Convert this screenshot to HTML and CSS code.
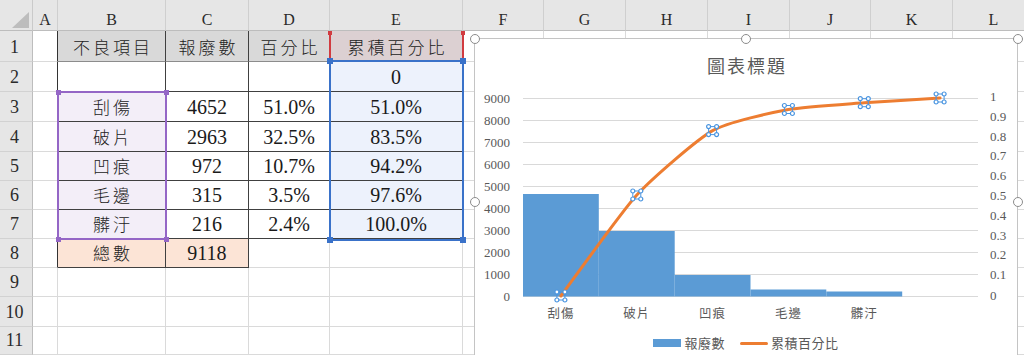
FILE: index.html
```html
<!DOCTYPE html>
<html lang="zh-Hant">
<head>
    <meta charset="UTF-8">
    <meta name="viewport" content="width=device-width, initial-scale=1.0">
    <title>不良項目 柏拉圖</title>
    <link rel="stylesheet" href="styles.css">
</head>
<body>

    <!-- Worksheet grid -->
    <div class="sheet">
        <!-- column headers -->
        <div class="corner"></div>
        <div class="col-head">A</div>
        <div class="col-head">B</div>
        <div class="col-head">C</div>
        <div class="col-head">D</div>
        <div class="col-head">E</div>
        <div class="col-head">F</div>
        <div class="col-head">G</div>
        <div class="col-head">H</div>
        <div class="col-head">I</div>
        <div class="col-head">J</div>
        <div class="col-head">K</div>
        <div class="col-head">L</div>

        <!-- row 1 -->
        <div class="row-head">1</div>
        <div class="cell a-edge"></div>
        <div class="cell tb head-fill"><span class="zh">不良項目</span></div>
        <div class="cell tb head-fill"><span class="zh">報廢數</span></div>
        <div class="cell tb head-fill"><span class="zh">百分比</span></div>
        <div class="cell tb ref-fill"><span class="zh">累積百分比</span></div>
        <div class="cell"></div><div class="cell"></div><div class="cell"></div><div class="cell"></div><div class="cell"></div><div class="cell"></div><div class="cell"></div>

        <!-- row 2 -->
        <div class="row-head">2</div>
        <div class="cell a-edge"></div>
        <div class="cell tb"></div>
        <div class="cell tb"></div>
        <div class="cell tb"></div>
        <div class="cell tb sel-fill">0</div>
        <div class="cell"></div><div class="cell"></div><div class="cell"></div><div class="cell"></div><div class="cell"></div><div class="cell"></div><div class="cell"></div>

        <!-- row 3 -->
        <div class="row-head">3</div>
        <div class="cell a-edge"></div>
        <div class="cell tb pick-fill"><span class="zh">刮傷</span></div>
        <div class="cell tb">4652</div>
        <div class="cell tb">51.0%</div>
        <div class="cell tb sel-fill">51.0%</div>
        <div class="cell"></div><div class="cell"></div><div class="cell"></div><div class="cell"></div><div class="cell"></div><div class="cell"></div><div class="cell"></div>

        <!-- row 4 -->
        <div class="row-head">4</div>
        <div class="cell a-edge"></div>
        <div class="cell tb pick-fill"><span class="zh">破片</span></div>
        <div class="cell tb">2963</div>
        <div class="cell tb">32.5%</div>
        <div class="cell tb sel-fill">83.5%</div>
        <div class="cell"></div><div class="cell"></div><div class="cell"></div><div class="cell"></div><div class="cell"></div><div class="cell"></div><div class="cell"></div>

        <!-- row 5 -->
        <div class="row-head">5</div>
        <div class="cell a-edge"></div>
        <div class="cell tb pick-fill"><span class="zh">凹痕</span></div>
        <div class="cell tb">972</div>
        <div class="cell tb">10.7%</div>
        <div class="cell tb sel-fill">94.2%</div>
        <div class="cell"></div><div class="cell"></div><div class="cell"></div><div class="cell"></div><div class="cell"></div><div class="cell"></div><div class="cell"></div>

        <!-- row 6 -->
        <div class="row-head">6</div>
        <div class="cell a-edge"></div>
        <div class="cell tb pick-fill"><span class="zh">毛邊</span></div>
        <div class="cell tb">315</div>
        <div class="cell tb">3.5%</div>
        <div class="cell tb sel-fill">97.6%</div>
        <div class="cell"></div><div class="cell"></div><div class="cell"></div><div class="cell"></div><div class="cell"></div><div class="cell"></div><div class="cell"></div>

        <!-- row 7 -->
        <div class="row-head">7</div>
        <div class="cell a-edge"></div>
        <div class="cell tb pick-fill"><span class="zh">髒汙</span></div>
        <div class="cell tb">216</div>
        <div class="cell tb">2.4%</div>
        <div class="cell tb sel-fill">100.0%</div>
        <div class="cell"></div><div class="cell"></div><div class="cell"></div><div class="cell"></div><div class="cell"></div><div class="cell"></div><div class="cell"></div>

        <!-- row 8 -->
        <div class="row-head">8</div>
        <div class="cell a-edge"></div>
        <div class="cell tb total-fill"><span class="zh">總數</span></div>
        <div class="cell tb total-fill">9118</div>
        <div class="cell"></div>
        <div class="cell"></div>
        <div class="cell"></div><div class="cell"></div><div class="cell"></div><div class="cell"></div><div class="cell"></div><div class="cell"></div><div class="cell"></div>

        <!-- rows 9 - 11 -->
        <div class="row-head">9</div>
        <div class="cell"></div><div class="cell"></div><div class="cell"></div><div class="cell"></div><div class="cell"></div><div class="cell"></div>
        <div class="cell"></div><div class="cell"></div><div class="cell"></div><div class="cell"></div><div class="cell"></div><div class="cell"></div>

        <div class="row-head">10</div>
        <div class="cell"></div><div class="cell"></div><div class="cell"></div><div class="cell"></div><div class="cell"></div><div class="cell"></div>
        <div class="cell"></div><div class="cell"></div><div class="cell"></div><div class="cell"></div><div class="cell"></div><div class="cell"></div>

        <div class="row-head">11</div>
        <div class="cell"></div><div class="cell"></div><div class="cell"></div><div class="cell"></div><div class="cell"></div><div class="cell"></div>
        <div class="cell"></div><div class="cell"></div><div class="cell"></div><div class="cell"></div><div class="cell"></div><div class="cell"></div>

        <!-- formula reference highlights (drawn over the cells) -->
        <div class="ref-red"><i class="dot dot-tl"></i><i class="dot dot-tr"></i></div>
        <div class="ref-purple"><i class="sq sq-tl"></i><i class="sq sq-tr"></i><i class="sq sq-bl"></i><i class="sq sq-br"></i></div>
        <div class="ref-blue"><i class="sq sq-tl"></i><i class="sq sq-tr"></i><i class="sq sq-bl"></i><i class="sq sq-br"></i></div>

        <!-- floating chart -->
        <div class="chart">
            <span class="handle h-tl"></span>
            <span class="handle h-tm"></span>
            <span class="handle h-tr"></span>
            <span class="handle h-ml"></span>
            <span class="handle h-mr"></span>

            <div class="chart-title">圖表標題</div>

            <svg class="plot" width="542" height="250" viewBox="0 0 542 250">
                <defs>
                    <g id="mk">
                        <rect x="-4" y="-4" width="8" height="8" class="mk-box"/>
                        <circle cx="-4" cy="-4" r="2" class="mk-dot"/>
                        <circle cx="4" cy="-4" r="2" class="mk-dot"/>
                        <circle cx="-4" cy="4" r="2" class="mk-dot"/>
                        <circle cx="4" cy="4" r="2" class="mk-dot"/>
                    </g>
                </defs>

                <!-- gridlines every 1000 -->
                <g class="grid">
                    <line x1="48" x2="503" y1="21.5" y2="21.5"/>
                    <line x1="48" x2="503" y1="43.5" y2="43.5"/>
                    <line x1="48" x2="503" y1="65.5" y2="65.5"/>
                    <line x1="48" x2="503" y1="87.5" y2="87.5"/>
                    <line x1="48" x2="503" y1="109.5" y2="109.5"/>
                    <line x1="48" x2="503" y1="131.5" y2="131.5"/>
                    <line x1="48" x2="503" y1="153.5" y2="153.5"/>
                    <line x1="48" x2="503" y1="175.5" y2="175.5"/>
                    <line x1="48" x2="503" y1="197.5" y2="197.5"/>
                    <line x1="48" x2="503" y1="219.5" y2="219.5"/>
                </g>

                <!-- left axis -->
                <g class="axis left">
                    <text x="35" y="26">9000</text>
                    <text x="35" y="48">8000</text>
                    <text x="35" y="70">7000</text>
                    <text x="35" y="92">6000</text>
                    <text x="35" y="114">5000</text>
                    <text x="35" y="136">4000</text>
                    <text x="35" y="158">3000</text>
                    <text x="35" y="180">2000</text>
                    <text x="35" y="202">1000</text>
                    <text x="35" y="224">0</text>
                </g>

                <!-- right axis -->
                <g class="axis right">
                    <text x="515" y="24">1</text>
                    <text x="515" y="44">0.9</text>
                    <text x="515" y="64">0.8</text>
                    <text x="515" y="83">0.7</text>
                    <text x="515" y="103">0.6</text>
                    <text x="515" y="123">0.5</text>
                    <text x="515" y="143">0.4</text>
                    <text x="515" y="163">0.3</text>
                    <text x="515" y="182">0.2</text>
                    <text x="515" y="202">0.1</text>
                    <text x="515" y="223">0</text>
                </g>

                <!-- 報廢數 bars -->
                <g class="bars">
                    <rect x="48" y="117" width="75.8" height="102.5"/>
                    <rect x="123.8" y="154" width="75.9" height="65.5"/>
                    <rect x="199.7" y="198" width="75.8" height="21.5"/>
                    <rect x="275.5" y="212.5" width="75.8" height="7"/>
                    <rect x="351.3" y="214.5" width="75.9" height="5"/>
                </g>

                <!-- category labels -->
                <g class="cats">
                    <text x="85.9" y="241">刮傷</text>
                    <text x="161.8" y="241">破片</text>
                    <text x="237.6" y="241">凹痕</text>
                    <text x="313.4" y="241">毛邊</text>
                    <text x="389.3" y="241">髒汙</text>
                </g>

                <!-- 累積百分比 line -->
                <path class="cum" d="M85.9 219 C93.5 208.9 146.6 134.5 161.8 118 C177 101.5 222.4 62.2 237.6 53.6 C252.8 45 298.2 35.3 313.4 32.5 C328.6 29.7 374.1 26.9 389.3 25.7 C404.5 24.6 457.5 21.5 465.1 21"/>

                <use href="#mk" x="85.9" y="219"/>
                <use href="#mk" x="161.8" y="118"/>
                <use href="#mk" x="237.6" y="53.6"/>
                <use href="#mk" x="313.4" y="32.5"/>
                <use href="#mk" x="389.3" y="25.7"/>
                <use href="#mk" x="465.1" y="21"/>
            </svg>

            <div class="legend">
                <span class="key"><i class="swatch-bar"></i>報廢數</span>
                <span class="key"><i class="swatch-line"></i>累積百分比</span>
            </div>
        </div>
    </div>

</body>
</html>
```

FILE: styles.css
```css
/* Page */
html, body {
    margin: 0;
    padding: 0;
    overflow: hidden;
    background: #fff;
}

body {
    font-family: "Liberation Serif", "Noto Sans CJK TC", serif;
    color: #1a1a1a;
}

/* Worksheet grid */
.sheet {
    position: relative;
    display: grid;
    grid-template-columns: 33px 25px 108px 83px 81px 133px 81px 82px 82px 82px 81px 82px 82px;
    grid-template-rows: 31px 31px 30px 30px 30px 29px 29px 29px 29px 29px 30px 28px;
    width: 1035px;
}

.corner {
    display: flex;
    align-items: flex-end;
    justify-content: flex-end;
    padding: 0 3px 2px 0;
    background: #e6e6e6;
    border-right: 1px solid #cacaca;
    border-bottom: 1px solid #bdbdbd;
    box-sizing: border-box;
}

.corner::after {
    content: "";
    width: 17px;
    height: 16px;
    background: #bdbdbd;
    clip-path: polygon(100% 0, 100% 100%, 0 100%);
}

.col-head {
    display: flex;
    align-items: flex-end;
    justify-content: center;
    background: #e6e6e6;
    border-right: 1px solid #cfcfcf;
    border-bottom: 1px solid #bdbdbd;
    box-sizing: border-box;
    font-size: 16px;
    line-height: 18px;
    color: #2b2b2b;
    padding-bottom: 1px;
}

.row-head {
    display: flex;
    align-items: flex-end;
    justify-content: center;
    background: #e6e6e6;
    border-right: 1px solid #bdbdbd;
    border-bottom: 1px solid #d2d2d2;
    box-sizing: border-box;
    font-size: 18px;
    line-height: 24px;
    padding: 0 3px 2px 0;
    color: #2b2b2b;
}

.cell {
    display: flex;
    align-items: flex-end;
    justify-content: center;
    border-right: 1px solid #dadada;
    border-bottom: 1px solid #dadada;
    box-sizing: border-box;
    font-size: 20px;
    line-height: 24px;
    padding-bottom: 2px;
    white-space: nowrap;
}

/* Table borders */
.a-edge {
    border-right-color: #333;
}

.tb {
    border-right-color: #404040;
    border-bottom-color: #404040;
}

.zh {
    font-family: "Noto Sans CJK TC", sans-serif;
    font-size: 17px;
    font-weight: 300;
    letter-spacing: 3px;
    padding-left: 3px;
    color: #222;
}

/* Cell fills */
.head-fill {
    background: #d9d9d9;
    border-bottom-color: #8c8c8c;
}

.ref-fill {
    background: #dcd0d2;
}

.sel-fill {
    background: #edf2fc;
}

.pick-fill {
    background: #f3eef8;
}

.total-fill {
    background: #fce4d6;
}

/* Formula reference highlights */
.ref-red {
    position: absolute;
    left: 329px;
    top: 31px;
    width: 135px;
    height: 31px;
    border-left: 2px solid #d13b40;
    border-right: 2px solid #d13b40;
    box-sizing: border-box;
}

.ref-red .dot {
    position: absolute;
    top: 0;
    width: 4px;
    height: 4px;
    background: #d13b40;
}

.ref-red .dot-tl { left: -3px; }
.ref-red .dot-tr { right: -3px; }

.ref-purple,
.ref-blue {
    position: absolute;
    box-sizing: border-box;
}

.ref-purple {
    left: 57px;
    top: 91px;
    width: 110px;
    height: 149px;
    border: 2px solid #9466c6;
}

.ref-blue {
    left: 329px;
    top: 60px;
    width: 135px;
    height: 181px;
    border: 2px solid #3a72c9;
}

.sq {
    position: absolute;
    width: 6px;
    height: 6px;
}

.ref-purple .sq { background: #9466c6; width: 5px; height: 5px; }
.ref-blue .sq { background: #3a72c9; }

.ref-purple .sq-tl { left: -3.5px; top: -3.5px; }
.ref-purple .sq-tr { right: -3.5px; top: -3.5px; }
.ref-purple .sq-bl { left: -3.5px; bottom: -3.5px; }
.ref-purple .sq-br { right: -3.5px; bottom: -3.5px; }

.ref-blue .sq-tl { left: -4px; top: -4px; }
.ref-blue .sq-tr { right: -4px; top: -4px; }
.ref-blue .sq-bl { left: -4px; bottom: -4px; }
.ref-blue .sq-br { right: -4px; bottom: -4px; }

/* Floating chart */
.chart {
    position: absolute;
    left: 474px;
    top: 38px;
    width: 544px;
    height: 328px;
    background: #fff;
    border: 1px solid #c4c4c4;
    box-sizing: border-box;
}

.handle {
    position: absolute;
    width: 10px;
    height: 10px;
    border: 1px solid #8c8c8c;
    border-radius: 50%;
    background: #fff;
    box-sizing: border-box;
}

.h-tl { left: -5px; top: -5px; }
.h-tm { left: 266px; top: -5px; }
.h-tr { left: 538px; top: -5px; }
.h-ml { left: -5px; top: 158px; }
.h-mr { left: 538px; top: 158px; }

.chart-title {
    padding: 14px 0 0 2px;
    line-height: 24px;
    text-align: center;
    font-family: "Noto Sans CJK TC", sans-serif;
    font-size: 18px;
    letter-spacing: 2px;
    color: #595959;
}

.plot {
    display: block;
}

.grid line {
    stroke: #d9d9d9;
    stroke-width: 1;
}

.axis text {
    font-family: "Liberation Serif", serif;
    font-size: 13px;
    fill: #595959;
}

.axis.left text {
    text-anchor: end;
}

.cats text {
    font-family: "Noto Sans CJK TC", sans-serif;
    font-size: 12.5px;
    letter-spacing: 1px;
    text-anchor: middle;
    fill: #595959;
}

.bars rect {
    fill: #5b9bd5;
}

.cum {
    fill: none;
    stroke: #ed7d31;
    stroke-width: 3;
    stroke-linecap: round;
    stroke-linejoin: round;
}

.mk-box {
    fill: none;
    stroke: #4a95e0;
    stroke-width: 1;
}

.mk-dot {
    fill: #fff;
    stroke: #4a95e0;
    stroke-width: 1.2;
}

/* Legend */
.legend {
    display: flex;
    justify-content: center;
    gap: 15px;
    margin-top: 4px;
    line-height: 24px;
    font-family: "Noto Sans CJK TC", sans-serif;
    font-size: 13px;
    letter-spacing: 0.5px;
    color: #595959;
}

.key {
    display: flex;
    align-items: center;
    gap: 3px;
}

.swatch-bar {
    width: 28px;
    height: 8px;
    background: #5b9bd5;
}

.swatch-line {
    width: 28px;
    height: 3px;
    border-radius: 2px;
    background: #ed7d31;
}
```
